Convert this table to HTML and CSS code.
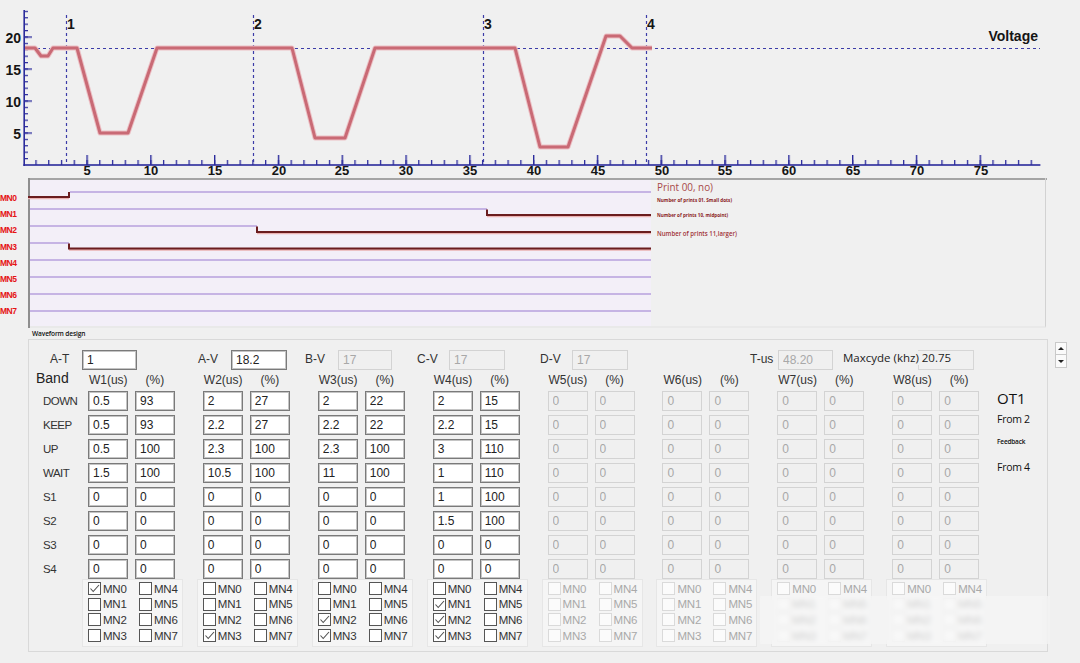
FILE: index.html
```html
<!DOCTYPE html>
<html>
<head>
<meta charset="utf-8">
<title>Waveform design</title>
<link rel="stylesheet" href="styles.css">
</head>
<body>
<div class="app">
  <svg class="volt" width="1080" height="178" viewBox="0 0 1080 178">
    <defs>
      <pattern id="xmin" patternUnits="userSpaceOnUse" x="22.6" y="0" width="12.76" height="178">
        <rect x="0" y="160" width="1.3" height="5" fill="#2b2b9c"/>
      </pattern>
      <pattern id="xmaj" patternUnits="userSpaceOnUse" x="22.6" y="0" width="63.8" height="178">
        <rect x="0" y="155" width="1.4" height="10" fill="#2b2b9c"/>
      </pattern>
      <pattern id="ymin" patternUnits="userSpaceOnUse" x="0" y="164.4" width="1080" height="6.4">
        <rect x="24" y="0" width="4" height="1.2" fill="#2b2b9c"/>
      </pattern>
      <pattern id="ymaj" patternUnits="userSpaceOnUse" x="0" y="164.4" width="1080" height="32">
        <rect x="24" y="0" width="8" height="1.3" fill="#2b2b9c"/>
      </pattern>
    </defs>
    <rect x="24" y="150" width="1016" height="15" fill="url(#xmin)"/>
    <rect x="24" y="150" width="1016" height="15" fill="url(#xmaj)"/>
    <rect x="24" y="10" width="10" height="154" fill="url(#ymin)"/>
    <rect x="24" y="10" width="10" height="154" fill="url(#ymaj)"/>
    <rect x="23.4" y="10" width="1.6" height="156" fill="#2b2b9c"/>
    <rect x="23.4" y="164.2" width="1017" height="1.6" fill="#2b2b9c"/>

    <line x1="25" y1="48.5" x2="1040" y2="48.5" stroke="#3c3ca8" stroke-width="1" stroke-dasharray="3 3"/>
    <line x1="66.5" y1="15" x2="66.5" y2="165" stroke="#3c3ca8" stroke-width="1.2" stroke-dasharray="3 3"/>
    <line x1="253.5" y1="15" x2="253.5" y2="165" stroke="#3c3ca8" stroke-width="1.2" stroke-dasharray="3 3"/>
    <line x1="483.5" y1="15" x2="483.5" y2="165" stroke="#3c3ca8" stroke-width="1.2" stroke-dasharray="3 3"/>
    <line x1="646.5" y1="15" x2="646.5" y2="165" stroke="#3c3ca8" stroke-width="1.2" stroke-dasharray="3 3"/>

    <polyline points="25,48 35,48 41,56 48,56 53,48 77,48 100,133 128,133 157,48 292,48 315,138 345,138 375,48 515,48 540,147 568,147 606,36 620,36 632,48 652,48"
      fill="none" stroke="#ecbfc4" stroke-width="5" stroke-linejoin="round"/>
    <polyline points="25,48 35,48 41,56 48,56 53,48 77,48 100,133 128,133 157,48 292,48 315,138 345,138 375,48 515,48 540,147 568,147 606,36 620,36 632,48 652,48"
      fill="none" stroke="#c96a75" stroke-width="3" stroke-linejoin="round"/>

    <g class="ax-text">
      <text x="21" y="43" text-anchor="end">20</text>
      <text x="21" y="75" text-anchor="end">15</text>
      <text x="21" y="107" text-anchor="end">10</text>
      <text x="21" y="139" text-anchor="end">5</text>

      <text class="xl" x="87" y="175" text-anchor="middle">5</text>
      <text class="xl" x="151" y="175" text-anchor="middle">10</text>
      <text class="xl" x="215" y="175" text-anchor="middle">15</text>
      <text class="xl" x="279" y="175" text-anchor="middle">20</text>
      <text class="xl" x="342" y="175" text-anchor="middle">25</text>
      <text class="xl" x="406" y="175" text-anchor="middle">30</text>
      <text class="xl" x="470" y="175" text-anchor="middle">35</text>
      <text class="xl" x="534" y="175" text-anchor="middle">40</text>
      <text class="xl" x="598" y="175" text-anchor="middle">45</text>
      <text class="xl" x="662" y="175" text-anchor="middle">50</text>
      <text class="xl" x="725" y="175" text-anchor="middle">55</text>
      <text class="xl" x="789" y="175" text-anchor="middle">60</text>
      <text class="xl" x="853" y="175" text-anchor="middle">65</text>
      <text class="xl" x="917" y="175" text-anchor="middle">70</text>
      <text class="xl" x="981" y="175" text-anchor="middle">75</text>

      <text x="67" y="29">1</text>
      <text x="254" y="29">2</text>
      <text x="484" y="29">3</text>
      <text x="647" y="29">4</text>
      <text x="1038" y="41" text-anchor="end">Voltage</text>
    </g>
  </svg>

  <div class="digi">
    <div class="mn-labels">
      <span>MN0</span><span>MN1</span><span>MN2</span><span>MN3</span>
      <span>MN4</span><span>MN5</span><span>MN6</span><span>MN7</span>
    </div>
    <svg class="digi-plot" width="1019" height="150" viewBox="28 178 1019 150">
      <rect x="30" y="180" width="621" height="146" fill="#f3eff8"/>
      <rect x="28" y="178" width="1019" height="2" fill="#a4a4a4"/>
      <rect x="28" y="178" width="2" height="150" fill="#8e8e8e"/>
      <rect x="1045" y="178" width="1" height="149" fill="#d2d2d2"/>
      <rect x="30" y="326.5" width="1016" height="1" fill="#e2e2e2"/>

      <g fill="none" stroke="#c6b4e4" stroke-width="2">
        <polyline points="70,192 651,192"/>
        <polyline points="30,209 487,209"/>
        <polyline points="30,226 257,226"/>
        <polyline points="30,243 69,243"/>
        <polyline points="30,260 651,260"/>
        <polyline points="30,277 651,277"/>
        <polyline points="30,294 651,294"/>
        <polyline points="30,311 651,311"/>
      </g>
      <g fill="none" stroke="#eab2b2" stroke-width="2" transform="translate(0,1.2)">
        <path d="M28,197 H69"/>
        <path d="M487,215 H651"/>
        <path d="M257,232 H651"/>
        <path d="M69,248.5 H651"/>
      </g>
      <g fill="none" stroke="#6a1d1f" stroke-width="2">
        <path d="M28,197 H69 V192"/>
        <path d="M487,209.5 V215 H651"/>
        <path d="M257,226.5 V232 H651"/>
        <path d="M69,243.5 V248.5 H651"/>
      </g>

      <text class="lg-big" x="657" y="190.5" textLength="56" lengthAdjust="spacingAndGlyphs">Print 00, no)</text>
      <text class="lg-small" x="657" y="201.5" textLength="75" lengthAdjust="spacingAndGlyphs">Number of prints 01. Small dots)</text>
      <text class="lg-small" x="657" y="216.5" textLength="71" lengthAdjust="spacingAndGlyphs">Number of prints 10, midpoint)</text>
      <text class="lg-mid" x="657" y="235.5" textLength="80" lengthAdjust="spacingAndGlyphs">Number of prints 11,larger)</text>
    </svg>
  </div>

  <div class="caption">Waveform design</div>

  <div class="form-row">
    <div class="panel">
      <div class="top-row">
        <div class="fld fld-at"><span class="f-lbl">A-T</span><input class="tin" value="1"></div>
        <div class="fld fld-av"><span class="f-lbl">A-V</span><input class="tin" value="18.2"></div>
        <div class="fld fld-bv"><span class="f-lbl">B-V</span><input class="tin" value="17" disabled></div>
        <div class="fld fld-cv"><span class="f-lbl">C-V</span><input class="tin" value="17" disabled></div>
        <div class="fld fld-dv"><span class="f-lbl">D-V</span><input class="tin" value="17" disabled></div>
        <div class="fld fld-tus"><span class="f-lbl">T-us</span><input class="tin" value="48.20" disabled></div>
        <div class="fld-max"><span class="max-box"></span><span class="max-lbl">Maxcyde (khz) 20.75</span></div>
      </div>

      <div class="grid">
        <div class="labels-col">
          <div class="band">Band</div>
          <div class="rlabels">
            <span>DOWN</span><span>KEEP</span><span>UP</span><span>WAIT</span>
            <span>S1</span><span>S2</span><span>S3</span><span>S4</span>
          </div>
        </div>

        <!-- W1 -->
        <div class="group">
          <div class="ghead"><span>W1(us)</span><span>(%)</span></div>
          <div class="rows">
            <div class="irow"><input value="0.5"><input value="93"></div>
            <div class="irow"><input value="0.5"><input value="93"></div>
            <div class="irow"><input value="0.5"><input value="100"></div>
            <div class="irow"><input value="1.5"><input value="100"></div>
            <div class="irow"><input value="0"><input value="0"></div>
            <div class="irow"><input value="0"><input value="0"></div>
            <div class="irow"><input value="0"><input value="0"></div>
            <div class="irow"><input value="0"><input value="0"></div>
          </div>
          <div class="cbox">
            <div class="ck"><span class="cb on"><svg viewBox="0 0 11 11"><polyline points="1.5,5.5 4.2,8.5 10,2"/></svg></span>MN0</div>
            <div class="ck"><span class="cb"></span>MN4</div>
            <div class="ck"><span class="cb"></span>MN1</div>
            <div class="ck"><span class="cb"></span>MN5</div>
            <div class="ck"><span class="cb"></span>MN2</div>
            <div class="ck"><span class="cb"></span>MN6</div>
            <div class="ck"><span class="cb"></span>MN3</div>
            <div class="ck"><span class="cb"></span>MN7</div>
          </div>
        </div>

        <!-- W2 -->
        <div class="group">
          <div class="ghead"><span>W2(us)</span><span>(%)</span></div>
          <div class="rows">
            <div class="irow"><input value="2"><input value="27"></div>
            <div class="irow"><input value="2.2"><input value="27"></div>
            <div class="irow"><input value="2.3"><input value="100"></div>
            <div class="irow"><input value="10.5"><input value="100"></div>
            <div class="irow"><input value="0"><input value="0"></div>
            <div class="irow"><input value="0"><input value="0"></div>
            <div class="irow"><input value="0"><input value="0"></div>
            <div class="irow"><input value="0"><input value="0"></div>
          </div>
          <div class="cbox">
            <div class="ck"><span class="cb"></span>MN0</div>
            <div class="ck"><span class="cb"></span>MN4</div>
            <div class="ck"><span class="cb"></span>MN1</div>
            <div class="ck"><span class="cb"></span>MN5</div>
            <div class="ck"><span class="cb"></span>MN2</div>
            <div class="ck"><span class="cb"></span>MN6</div>
            <div class="ck"><span class="cb on"><svg viewBox="0 0 11 11"><polyline points="1.5,5.5 4.2,8.5 10,2"/></svg></span>MN3</div>
            <div class="ck"><span class="cb"></span>MN7</div>
          </div>
        </div>

        <!-- W3 -->
        <div class="group">
          <div class="ghead"><span>W3(us)</span><span>(%)</span></div>
          <div class="rows">
            <div class="irow"><input value="2"><input value="22"></div>
            <div class="irow"><input value="2.2"><input value="22"></div>
            <div class="irow"><input value="2.3"><input value="100"></div>
            <div class="irow"><input value="11"><input value="100"></div>
            <div class="irow"><input value="0"><input value="0"></div>
            <div class="irow"><input value="0"><input value="0"></div>
            <div class="irow"><input value="0"><input value="0"></div>
            <div class="irow"><input value="0"><input value="0"></div>
          </div>
          <div class="cbox">
            <div class="ck"><span class="cb"></span>MN0</div>
            <div class="ck"><span class="cb"></span>MN4</div>
            <div class="ck"><span class="cb"></span>MN1</div>
            <div class="ck"><span class="cb"></span>MN5</div>
            <div class="ck"><span class="cb on"><svg viewBox="0 0 11 11"><polyline points="1.5,5.5 4.2,8.5 10,2"/></svg></span>MN2</div>
            <div class="ck"><span class="cb"></span>MN6</div>
            <div class="ck"><span class="cb on"><svg viewBox="0 0 11 11"><polyline points="1.5,5.5 4.2,8.5 10,2"/></svg></span>MN3</div>
            <div class="ck"><span class="cb"></span>MN7</div>
          </div>
        </div>

        <!-- W4 -->
        <div class="group">
          <div class="ghead"><span>W4(us)</span><span>(%)</span></div>
          <div class="rows">
            <div class="irow"><input value="2"><input value="15"></div>
            <div class="irow"><input value="2.2"><input value="15"></div>
            <div class="irow"><input value="3"><input value="110"></div>
            <div class="irow"><input value="1"><input value="110"></div>
            <div class="irow"><input value="1"><input value="100"></div>
            <div class="irow"><input value="1.5"><input value="100"></div>
            <div class="irow"><input value="0"><input value="0"></div>
            <div class="irow"><input value="0"><input value="0"></div>
          </div>
          <div class="cbox">
            <div class="ck"><span class="cb"></span>MN0</div>
            <div class="ck"><span class="cb"></span>MN4</div>
            <div class="ck"><span class="cb on"><svg viewBox="0 0 11 11"><polyline points="1.5,5.5 4.2,8.5 10,2"/></svg></span>MN1</div>
            <div class="ck"><span class="cb"></span>MN5</div>
            <div class="ck"><span class="cb on"><svg viewBox="0 0 11 11"><polyline points="1.5,5.5 4.2,8.5 10,2"/></svg></span>MN2</div>
            <div class="ck"><span class="cb"></span>MN6</div>
            <div class="ck"><span class="cb on"><svg viewBox="0 0 11 11"><polyline points="1.5,5.5 4.2,8.5 10,2"/></svg></span>MN3</div>
            <div class="ck"><span class="cb"></span>MN7</div>
          </div>
        </div>

        <!-- W5 -->
        <div class="group off">
          <div class="ghead"><span>W5(us)</span><span>(%)</span></div>
          <div class="rows">
            <div class="irow"><input value="0" disabled><input value="0" disabled></div>
            <div class="irow"><input value="0" disabled><input value="0" disabled></div>
            <div class="irow"><input value="0" disabled><input value="0" disabled></div>
            <div class="irow"><input value="0" disabled><input value="0" disabled></div>
            <div class="irow"><input value="0" disabled><input value="0" disabled></div>
            <div class="irow"><input value="0" disabled><input value="0" disabled></div>
            <div class="irow"><input value="0" disabled><input value="0" disabled></div>
            <div class="irow"><input value="0" disabled><input value="0" disabled></div>
          </div>
          <div class="cbox">
            <div class="ck"><span class="cb"></span>MN0</div>
            <div class="ck"><span class="cb"></span>MN4</div>
            <div class="ck"><span class="cb"></span>MN1</div>
            <div class="ck"><span class="cb"></span>MN5</div>
            <div class="ck"><span class="cb"></span>MN2</div>
            <div class="ck"><span class="cb"></span>MN6</div>
            <div class="ck"><span class="cb"></span>MN3</div>
            <div class="ck"><span class="cb"></span>MN7</div>
          </div>
        </div>

        <!-- W6 -->
        <div class="group off">
          <div class="ghead"><span>W6(us)</span><span>(%)</span></div>
          <div class="rows">
            <div class="irow"><input value="0" disabled><input value="0" disabled></div>
            <div class="irow"><input value="0" disabled><input value="0" disabled></div>
            <div class="irow"><input value="0" disabled><input value="0" disabled></div>
            <div class="irow"><input value="0" disabled><input value="0" disabled></div>
            <div class="irow"><input value="0" disabled><input value="0" disabled></div>
            <div class="irow"><input value="0" disabled><input value="0" disabled></div>
            <div class="irow"><input value="0" disabled><input value="0" disabled></div>
            <div class="irow"><input value="0" disabled><input value="0" disabled></div>
          </div>
          <div class="cbox">
            <div class="ck"><span class="cb"></span>MN0</div>
            <div class="ck"><span class="cb"></span>MN4</div>
            <div class="ck"><span class="cb"></span>MN1</div>
            <div class="ck"><span class="cb"></span>MN5</div>
            <div class="ck"><span class="cb"></span>MN2</div>
            <div class="ck"><span class="cb"></span>MN6</div>
            <div class="ck"><span class="cb"></span>MN3</div>
            <div class="ck"><span class="cb"></span>MN7</div>
          </div>
        </div>

        <!-- W7 -->
        <div class="group off">
          <div class="ghead"><span>W7(us)</span><span>(%)</span></div>
          <div class="rows">
            <div class="irow"><input value="0" disabled><input value="0" disabled></div>
            <div class="irow"><input value="0" disabled><input value="0" disabled></div>
            <div class="irow"><input value="0" disabled><input value="0" disabled></div>
            <div class="irow"><input value="0" disabled><input value="0" disabled></div>
            <div class="irow"><input value="0" disabled><input value="0" disabled></div>
            <div class="irow"><input value="0" disabled><input value="0" disabled></div>
            <div class="irow"><input value="0" disabled><input value="0" disabled></div>
            <div class="irow"><input value="0" disabled><input value="0" disabled></div>
          </div>
          <div class="cbox">
            <div class="ck"><span class="cb"></span>MN0</div>
            <div class="ck"><span class="cb"></span>MN4</div>
            <div class="ck"><span class="cb"></span>MN1</div>
            <div class="ck"><span class="cb"></span>MN5</div>
            <div class="ck"><span class="cb"></span>MN2</div>
            <div class="ck"><span class="cb"></span>MN6</div>
            <div class="ck"><span class="cb"></span>MN3</div>
            <div class="ck"><span class="cb"></span>MN7</div>
          </div>
        </div>

        <!-- W8 -->
        <div class="group off">
          <div class="ghead"><span>W8(us)</span><span>(%)</span></div>
          <div class="rows">
            <div class="irow"><input value="0" disabled><input value="0" disabled></div>
            <div class="irow"><input value="0" disabled><input value="0" disabled></div>
            <div class="irow"><input value="0" disabled><input value="0" disabled></div>
            <div class="irow"><input value="0" disabled><input value="0" disabled></div>
            <div class="irow"><input value="0" disabled><input value="0" disabled></div>
            <div class="irow"><input value="0" disabled><input value="0" disabled></div>
            <div class="irow"><input value="0" disabled><input value="0" disabled></div>
            <div class="irow"><input value="0" disabled><input value="0" disabled></div>
          </div>
          <div class="cbox">
            <div class="ck"><span class="cb"></span>MN0</div>
            <div class="ck"><span class="cb"></span>MN4</div>
            <div class="ck"><span class="cb"></span>MN1</div>
            <div class="ck"><span class="cb"></span>MN5</div>
            <div class="ck"><span class="cb"></span>MN2</div>
            <div class="ck"><span class="cb"></span>MN6</div>
            <div class="ck"><span class="cb"></span>MN3</div>
            <div class="ck"><span class="cb"></span>MN7</div>
          </div>
        </div>

        <div class="notes">
          <div class="n-ot">OT1</div>
          <div class="n-from">From 2</div>
          <div class="n-fb">Feedback</div>
          <div class="n-from n-from4">From 4</div>
        </div>
      </div>
      <div class="smear"></div>
    </div>
    <div class="spin">
      <span class="sp"><i class="tri-up"></i></span>
      <span class="sp"><i class="tri-down"></i></span>
    </div>
  </div>
</div>
</body>
</html>
```

FILE: styles.css
```css
* { box-sizing: border-box; margin: 0; padding: 0; }
html, body {
  width: 1080px;
  height: 663px;
  overflow: hidden;
  background: #f0f0f0;
}
body {
  font-family: "Liberation Sans", Arial, sans-serif;
  font-size: 12px;
  color: #333;
}
.app { width: 1080px; height: 663px; }

/* ---------- voltage chart ---------- */
.volt { display: block; }
.ax-text text {
  font-family: "Liberation Sans", Arial, sans-serif;
  font-weight: 700;
  font-size: 14px;
  fill: #151515;
}
.ax-text .xl { font-size: 13px; }

/* ---------- digital waveform ---------- */
.digi { display: flex; height: 150px; }
.mn-labels {
  width: 28px;
  padding-top: 12px;
  display: flex;
  flex-direction: column;
}
.mn-labels span {
  display: block;
  width: 18px;
  height: 16.2px;
  line-height: 16.2px;
  white-space: nowrap;
  font-weight: 700;
  font-size: 8.5px;
  color: #e51414;
  letter-spacing: -0.5px;
}
.digi-plot { display: block; }
.lg-big { font-family: "Open Sans", sans-serif; font-size: 11px; fill: #a84a4a; }
.lg-small { font-family: "Open Sans", sans-serif; font-size: 5.5px; font-weight: 700; fill: #8a1c1e; }
.lg-mid { font-family: "Open Sans", sans-serif; font-size: 7px; font-weight: 600; fill: #a03236; }

.caption {
  height: 11px;
  line-height: 11px;
  padding-left: 32px;
  font-family: "Open Sans", sans-serif;
  font-size: 6.6px;
  font-weight: 600;
  color: #111;
  letter-spacing: -0.15px;
}

/* ---------- form panel ---------- */
.form-row { display: flex; align-items: flex-start; }
.panel {
  position: relative;
  margin-left: 28px;
  width: 1020px;
  height: 313px;
  border: 1px solid #d9d9d9;
}
.spin {
  display: flex;
  flex-direction: column;
  margin-left: 7px;
  margin-top: 3px;
}
.sp {
  width: 12px;
  height: 13px;
  border: 1px solid #c9c9c9;
  background: #fafafa;
  display: flex;
  align-items: center;
  justify-content: center;
}
.sp + .sp { border-top: none; }
.tri-up {
  width: 0; height: 0;
  border-left: 3px solid transparent;
  border-right: 3px solid transparent;
  border-bottom: 3px solid #222;
}
.tri-down {
  width: 0; height: 0;
  border-left: 3px solid transparent;
  border-right: 3px solid transparent;
  border-top: 3px solid #222;
}

input {
  display: block;
  width: 40px;
  height: 20px;
  padding: 0 0 0 4px;
  font-family: "Liberation Sans", Arial, sans-serif;
  font-size: 12px;
  color: #222;
  background: #fff;
  border: 1px solid #7a7a7a;
  box-shadow: inset 0 0 0 1px #c4c4c4;
  outline: none;
  border-radius: 0;
}
input:disabled {
  color: #a8a8a8;
  background: #f0f0f0;
  border-color: #d3d3d3;
  box-shadow: none;
}

.top-row {
  display: flex;
  align-items: center;
  height: 20px;
  margin-top: 10px;
  padding-left: 21px;
}
.fld { display: flex; align-items: center; }
.f-lbl { display: block; width: 32px; padding-bottom: 3px; color: #333; font-size: 12px; }
.tin { width: 56px; }
.fld-at .tin { width: 55px; }
.fld-av { margin-left: 61px; }
.fld-av .f-lbl { width: 33px; }
.fld-bv { margin-left: 18px; }
.fld-bv .f-lbl { width: 33px; }
.fld-bv .tin { width: 54px; }
.fld-cv { margin-left: 25px; }
.fld-dv { margin-left: 35px; }
.fld-tus { margin-left: 122px; }
.fld-tus .f-lbl { width: 28px; }
.fld-tus .tin { width: 55px; }
.fld-max {
  display: grid;
  width: 131px;
  margin-left: 10px;
  align-items: center;
}
.max-box, .max-lbl { grid-area: 1 / 1; }
.max-box {
  justify-self: end;
  width: 56px;
  height: 20px;
  border: 1px solid #d6d6d6;
}
.max-lbl {
  justify-self: start;
  position: relative;
  background: #f0f0f0;
  font-family: "Open Sans", sans-serif;
  font-size: 11.5px;
  line-height: 14px;
  color: #222;
  white-space: nowrap;
  padding-right: 1px;
  margin-top: -4px;
}

.grid { display: flex; }
.labels-col { width: 53px; }
.band {
  height: 21px;
  padding-left: 7px;
  font-size: 14px;
  line-height: 17px;
  color: #222;
}
.rlabels { display: flex; flex-direction: column; gap: 4px; }
.rlabels span {
  display: block;
  height: 20px;
  line-height: 20px;
  padding-left: 14px;
  font-size: 11.5px;
  letter-spacing: -0.5px;
  color: #333;
}

.group { width: 115px; display: flex; flex-direction: column; }
.ghead { display: flex; height: 21px; padding-left: 6px; gap: 7px; }
.ghead span {
  display: block;
  width: 40px;
  text-align: center;
  line-height: 21px;
  font-size: 12px;
  color: #333;
}
.ghead span:first-child { text-align: left; padding-left: 1px; }
.rows { display: flex; flex-direction: column; gap: 4px; }
.irow { display: flex; gap: 7px; padding-left: 6px; }

.cbox {
  width: 101px;
  height: 68px;
  background: #f5f5f5;
  border: 1px solid #e6e6e6;
  padding: 1px 0 0 5px;
  display: grid;
  grid-template-columns: 51px 44px;
  grid-auto-rows: 15.6px;
}
.ck {
  display: flex;
  align-items: center;
  font-size: 11.5px;
  letter-spacing: -0.2px;
  color: #333;
  white-space: nowrap;
}
.cb {
  display: flex;
  align-items: center;
  justify-content: center;
  width: 13px;
  height: 13px;
  margin-right: 2px;
  border: 1px solid #555;
  background: #fff;
  flex: none;
}
.cb svg { width: 11px; height: 11px; }
.cb polyline { fill: none; stroke: #505050; stroke-width: 1.1; }
.off .cb { border-color: #dadada; background: #fbfbfb; }
.off .ck { color: #a9a9a9; }

.notes { margin-left: -4px; padding-top: 17px; width: 50px; }
.n-ot {
  font-family: "Open Sans", sans-serif;
  font-size: 15px;
  line-height: 22px;
  color: #111;
}
.n-from {
  margin-top: 3px;
  font-family: "Open Sans", sans-serif;
  font-size: 10.5px;
  letter-spacing: -0.3px;
  line-height: 14px;
  color: #111;
  white-space: nowrap;
}
.n-fb {
  margin-top: 11px;
  font-family: "Open Sans", sans-serif;
  font-size: 6.5px;
  font-weight: 600;
  letter-spacing: -0.2px;
  line-height: 10px;
  color: #111;
}
.n-from4 { margin-top: 13px; }

.smear {
  position: absolute;
  left: 731px;
  top: 256px;
  width: 290px;
  height: 48px;
  background: rgba(248, 248, 248, 0.5);
  backdrop-filter: blur(2.5px);
}
```
